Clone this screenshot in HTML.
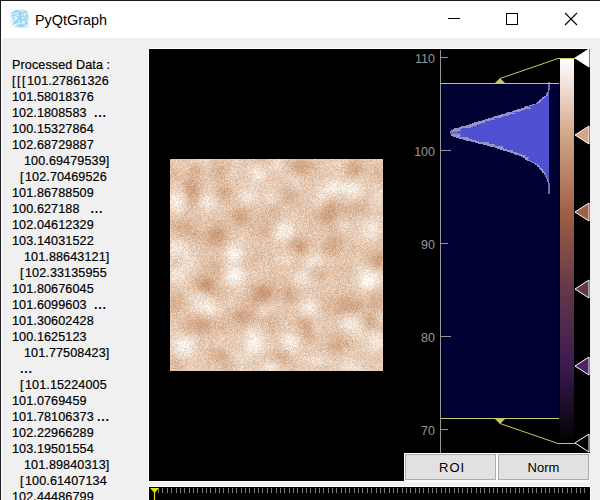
<!DOCTYPE html>
<html><head><meta charset="utf-8">
<style>
html,body{margin:0;padding:0;}
body{width:600px;height:500px;overflow:hidden;position:relative;background:#f0f0f0;font-family:"Liberation Sans",sans-serif;}
.abs{position:absolute;}
.bk{letter-spacing:1.5px;}
.dt{letter-spacing:0.7px;font-weight:bold;-webkit-text-stroke:0;}
.tl{position:absolute;font-size:12.6px;letter-spacing:0.1px;-webkit-text-stroke:0.2px #000;line-height:16px;color:#000;white-space:pre;}
.btn{position:absolute;box-sizing:border-box;border:1px solid #adadad;background:#e1e1e1;font-size:13px;text-align:center;line-height:25px;color:#000;}
.ax{position:absolute;font-size:12.5px;color:#969696;text-align:right;width:30px;line-height:14px;}
</style></head><body>
<div class="abs" style="left:0;top:0;width:600px;height:1px;background:#1c1c1c"></div>
<div class="abs" style="left:0;top:0;width:1px;height:500px;background:#1c1c1c"></div>
<div class="abs" style="left:1px;top:1px;width:599px;height:37px;background:#fff"></div>
<div class="abs" style="left:1px;top:38px;width:1px;height:462px;background:#fff"></div>
<!-- icon -->
<svg class="abs" style="left:9px;top:8px" width="22" height="22" viewBox="0 0 22 22">
 <line x1="1.5" y1="1" x2="1.5" y2="20" stroke="#eeeeee" stroke-width="1"/>
 <path d="M3,3 Q7,0.5 11,2 Q16,0.5 19,3 Q20,8 19.5,12 Q19,16 20,19 Q17,20.5 14,19 Q10,20 6,19 Q3,17 2.5,12 Q2,7 3,3 Z" fill="#cfeaf8"/>
 <g fill="none" stroke="#86cdf0" stroke-width="1.2" stroke-linecap="round" opacity="0.9">
  <path d="M3.5,5 L8,2.5 L11,7 L16,3.5 L18.5,8 L14,11.5 L18,15.5 L12,17.5 L8,13.5 L4,16.5"/>
  <path d="M4,10 L9,8.5 L12.5,12.5 L9,18 L15,19"/>
  <path d="M11,2.5 L11.5,14 M5.5,14 L16,7 M3,8 L7,6.5 M15,13 L19,11"/>
 </g>
 <g fill="#fff" opacity="0.95"><circle cx="7" cy="9.5" r="1.1"/><circle cx="15" cy="14" r="1"/><circle cx="10" cy="15.5" r="0.9"/><circle cx="16" cy="6.5" r="0.9"/><circle cx="6" cy="17" r="0.8"/><circle cx="13.5" cy="9.5" r="0.7"/></g>
</svg>
<div class="abs" style="left:35px;top:10px;font-size:14.4px;line-height:20px;color:#000">PyQtGraph</div>
<!-- window controls -->
<div class="abs" style="left:448px;top:18px;width:12px;height:1px;background:#000"></div>
<div class="abs" style="left:506px;top:13px;width:10px;height:10px;border:1px solid #000"></div>
<svg class="abs" style="left:564px;top:12px" width="14" height="14" viewBox="0 0 14 14"><path d="M1,1 L13,13 M13,1 L1,13" stroke="#000" stroke-width="1.1"/></svg>

<!-- left text -->
<div class="tl" style="top:57px;left:12px">Processed Data :</div>
<div class="tl" style="top:73px;left:12px"><span class="bk">[</span><span class="bk">[</span><span class="bk">[</span>101.27861326</div>
<div class="tl" style="top:89px;left:12px">101.58018376</div>
<div class="tl" style="top:105px;left:12px">102.1808583</div>
<div class="tl" style="top:105px;left:94px"><span class="dt">...</span></div>
<div class="tl" style="top:121px;left:12px">100.15327864</div>
<div class="tl" style="top:137px;left:12px">102.68729887</div>
<div class="tl" style="top:153px;left:24px">100.69479539]</div>
<div class="tl" style="top:169px;left:20px"><span class="bk">[</span>102.70469526</div>
<div class="tl" style="top:185px;left:12px">101.86788509</div>
<div class="tl" style="top:201px;left:12px">100.627188</div>
<div class="tl" style="top:201px;left:90.5px"><span class="dt">...</span></div>
<div class="tl" style="top:217px;left:12px">102.04612329</div>
<div class="tl" style="top:233px;left:12px">103.14031522</div>
<div class="tl" style="top:249px;left:24px">101.88643121]</div>
<div class="tl" style="top:265px;left:20px"><span class="bk">[</span>102.33135955</div>
<div class="tl" style="top:281px;left:12px">101.80676045</div>
<div class="tl" style="top:297px;left:12px">101.6099603</div>
<div class="tl" style="top:297px;left:94px"><span class="dt">...</span></div>
<div class="tl" style="top:313px;left:12px">101.30602428</div>
<div class="tl" style="top:329px;left:12px">100.1625123</div>
<div class="tl" style="top:345px;left:24px">101.77508423]</div>
<div class="tl" style="top:361px;left:20px"><span class="dt">...</span></div>
<div class="tl" style="top:377px;left:20px"><span class="bk">[</span>101.15224005</div>
<div class="tl" style="top:393px;left:12px">101.0769459</div>
<div class="tl" style="top:409px;left:12px">101.78106373</div>
<div class="tl" style="top:409px;left:97px"><span class="dt">...</span></div>
<div class="tl" style="top:425px;left:12px">102.22966289</div>
<div class="tl" style="top:441px;left:12px">103.19501554</div>
<div class="tl" style="top:457px;left:24px">101.89840313]</div>
<div class="tl" style="top:473px;left:20px"><span class="bk">[</span>100.61407134</div>
<div class="tl" style="top:489px;left:12px">102.44486799</div>

<!-- graphics view -->
<div class="abs" style="left:148px;top:48px;width:442px;height:434px;background:#fff"></div>
<div class="abs" style="left:149px;top:49px;width:441px;height:432px;background:#000"></div>
<!-- image -->
<svg class="abs" style="left:170px;top:159px" width="213" height="212" viewBox="170 159 213 212">
 <defs>
  <filter id="bl" x="-20%" y="-20%" width="140%" height="140%"><feGaussianBlur stdDeviation="5.5"/></filter>
  <filter id="nz" x="0" y="0" width="100%" height="100%">
   <feTurbulence type="fractalNoise" baseFrequency="2.2" numOctaves="1" seed="5" result="t"/>
   <feColorMatrix type="matrix" in="t" values="0 0 0 0 1  0 0 0 0 1  0 0 0 0 1  2.4 0 0 0 -0.9"/>
  </filter>
  <filter id="nz2" x="0" y="0" width="100%" height="100%">
   <feTurbulence type="fractalNoise" baseFrequency="2.0" numOctaves="1" seed="11" result="t"/>
   <feColorMatrix type="matrix" in="t" values="0 0 0 0 0.62  0 0 0 0 0.38  0 0 0 0 0.25  2.2 0 0 0 -0.9"/>
  </filter>
  <clipPath id="cp"><rect x="170" y="159" width="213" height="212"/></clipPath>
 </defs>
 <g clip-path="url(#cp)">
 <rect x="170" y="159" width="213" height="212" fill="#dcbc9f"/>
 <g filter="url(#bl)" fill="#b57b55"><ellipse cx="223" cy="172" rx="8.1" ry="7.2" opacity="0.8"/><ellipse cx="191" cy="190" rx="7.2" ry="11.7" opacity="0.9"/><ellipse cx="223" cy="193" rx="6.3" ry="6.3" opacity="0.6"/><ellipse cx="240" cy="216" rx="8.1" ry="7.2" opacity="0.9"/><ellipse cx="217" cy="233" rx="8.1" ry="7.2" opacity="0.9"/><ellipse cx="183" cy="227" rx="7.2" ry="7.2" opacity="0.6"/><ellipse cx="265" cy="229" rx="7.2" ry="7.2" opacity="0.5"/><ellipse cx="301" cy="167" rx="8.1" ry="7.2" opacity="0.9"/><ellipse cx="356" cy="165" rx="7.2" ry="6.3" opacity="0.5"/><ellipse cx="289" cy="197" rx="7.2" ry="7.2" opacity="0.6"/><ellipse cx="327" cy="216" rx="9.0" ry="8.1" opacity="0.9"/><ellipse cx="361" cy="208" rx="8.1" ry="7.2" opacity="0.6"/><ellipse cx="297" cy="244" rx="8.1" ry="7.2" opacity="0.7"/><ellipse cx="329" cy="248" rx="7.2" ry="6.3" opacity="0.5"/><ellipse cx="375" cy="259" rx="7.2" ry="7.2" opacity="0.6"/><ellipse cx="204" cy="284" rx="9.0" ry="7.2" opacity="0.9"/><ellipse cx="261" cy="293" rx="8.1" ry="7.2" opacity="0.9"/><ellipse cx="176" cy="303" rx="7.2" ry="7.2" opacity="0.6"/><ellipse cx="242" cy="316" rx="9.0" ry="7.2" opacity="0.9"/><ellipse cx="202" cy="324" rx="9.0" ry="7.2" opacity="0.9"/><ellipse cx="219" cy="354" rx="8.1" ry="7.2" opacity="0.7"/><ellipse cx="174" cy="365" rx="7.2" ry="7.2" opacity="0.6"/><ellipse cx="289" cy="293" rx="8.1" ry="8.1" opacity="0.7"/><ellipse cx="318" cy="271" rx="7.2" ry="6.3" opacity="0.5"/><ellipse cx="346" cy="305" rx="9.0" ry="8.1" opacity="0.9"/><ellipse cx="376" cy="301" rx="7.2" ry="7.2" opacity="0.6"/><ellipse cx="306" cy="326" rx="8.1" ry="7.2" opacity="0.7"/><ellipse cx="335" cy="345" rx="8.1" ry="7.2" opacity="0.6"/><ellipse cx="282" cy="358" rx="7.2" ry="7.2" opacity="0.6"/></g>
 <g filter="url(#bl)" fill="#fbf6f2"><ellipse cx="176" cy="201" rx="7.2" ry="9.0" opacity="0.9"/><ellipse cx="208" cy="201" rx="7.2" ry="7.2" opacity="0.7"/><ellipse cx="248" cy="195" rx="7.2" ry="7.2" opacity="0.6"/><ellipse cx="176" cy="250" rx="8.1" ry="8.1" opacity="0.8"/><ellipse cx="233" cy="254" rx="8.1" ry="7.2" opacity="0.8"/><ellipse cx="255" cy="172" rx="8.1" ry="7.2" opacity="0.6"/><ellipse cx="293" cy="180" rx="7.2" ry="7.2" opacity="0.6"/><ellipse cx="346" cy="189" rx="12.6" ry="7.2" opacity="1.0"/><ellipse cx="284" cy="231" rx="8.1" ry="8.1" opacity="0.9"/><ellipse cx="371" cy="229" rx="8.1" ry="8.1" opacity="0.7"/><ellipse cx="314" cy="261" rx="8.1" ry="6.3" opacity="0.7"/><ellipse cx="178" cy="273" rx="7.2" ry="7.2" opacity="0.7"/><ellipse cx="234" cy="278" rx="8.1" ry="7.2" opacity="0.7"/><ellipse cx="208" cy="307" rx="8.1" ry="8.1" opacity="0.8"/><ellipse cx="183" cy="345" rx="8.1" ry="9.0" opacity="0.9"/><ellipse cx="255" cy="343" rx="8.1" ry="8.1" opacity="0.8"/><ellipse cx="272" cy="367" rx="7.2" ry="5.4" opacity="0.7"/><ellipse cx="301" cy="278" rx="7.2" ry="7.2" opacity="0.7"/><ellipse cx="369" cy="278" rx="8.1" ry="7.2" opacity="0.8"/><ellipse cx="310" cy="307" rx="8.1" ry="7.2" opacity="0.8"/><ellipse cx="350" cy="324" rx="8.1" ry="7.2" opacity="0.8"/><ellipse cx="289" cy="341" rx="8.1" ry="7.2" opacity="0.8"/><ellipse cx="376" cy="341" rx="7.2" ry="7.2" opacity="0.7"/><ellipse cx="318" cy="362" rx="8.1" ry="6.3" opacity="0.7"/></g>
 <rect x="170" y="159" width="213" height="212" filter="url(#nz)"/>
 <rect x="170" y="159" width="213" height="212" filter="url(#nz2)"/>
 </g>
</svg>

<canvas id="cv" class="abs" style="left:170px;top:159px" width="213" height="212"></canvas>
<script>
(function(){
 var c=document.getElementById('cv'); if(!c||!c.getContext) return; var ctx=c.getContext('2d');
 var W=213,H=212,X0=170,Y0=159; var im=ctx.createImageData(W,H); var d=im.data;
 var B=[[223,172,7.6,6.8,-0.8],[191,190,6.8,11.0,-0.9],[223,193,6.0,6.0,-0.6],[240,216,7.6,6.8,-0.9],[217,233,7.6,6.8,-0.9],[183,227,6.8,6.8,-0.6],[265,229,6.8,6.8,-0.5],[301,167,7.6,6.8,-0.9],[356,165,6.8,6.0,-0.5],[289,197,6.8,6.8,-0.6],[327,216,8.5,7.6,-0.9],[361,208,7.6,6.8,-0.6],[297,244,7.6,6.8,-0.7],[329,248,6.8,6.0,-0.5],[375,259,6.8,6.8,-0.6],[204,284,8.5,6.8,-0.9],[261,293,7.6,6.8,-0.9],[176,303,6.8,6.8,-0.6],[242,316,8.5,6.8,-0.9],[202,324,8.5,6.8,-0.9],[219,354,7.6,6.8,-0.7],[174,365,6.8,6.8,-0.6],[289,293,7.6,7.6,-0.7],[318,271,6.8,6.0,-0.5],[346,305,8.5,7.6,-0.9],[376,301,6.8,6.8,-0.6],[306,326,7.6,6.8,-0.7],[335,345,7.6,6.8,-0.6],[282,358,6.8,6.8,-0.6],[176,201,6.8,8.5,0.9],[208,201,6.8,6.8,0.7],[248,195,6.8,6.8,0.6],[176,250,7.6,7.6,0.8],[233,254,7.6,6.8,0.8],[255,172,7.6,6.8,0.6],[293,180,6.8,6.8,0.6],[346,189,11.9,6.8,1.0],[284,231,7.6,7.6,0.9],[371,229,7.6,7.6,0.7],[314,261,7.6,6.0,0.7],[178,273,6.8,6.8,0.7],[234,278,7.6,6.8,0.7],[208,307,7.6,7.6,0.8],[183,345,7.6,8.5,0.9],[255,343,7.6,7.6,0.8],[272,367,6.8,5.1,0.7],[301,278,6.8,6.8,0.7],[369,278,7.6,6.8,0.8],[310,307,7.6,6.8,0.8],[350,324,7.6,6.8,0.8],[289,341,7.6,6.8,0.8],[376,341,6.8,6.8,0.7],[318,362,7.6,6.0,0.7],[343,226,4.7,4.7,0.29],[191,260,5.7,5.7,0.10],[197,294,5.5,5.5,0.32],[171,366,4.5,4.5,0.28],[278,340,4.5,4.5,-0.16],[184,327,5.6,5.6,-0.27],[208,172,4.6,4.6,0.05],[263,310,4.2,4.2,0.31],[384,318,6.2,6.2,0.31],[186,256,4.2,4.2,0.25],[285,178,5.3,5.3,0.25],[288,181,6.8,6.8,-0.40],[353,370,6.3,6.3,0.40],[283,203,5.4,5.4,0.21],[336,239,6.8,6.8,-0.42],[276,163,5.1,5.1,0.44],[191,373,6.7,6.7,0.17],[177,259,6.1,6.1,-0.36],[232,174,6.5,6.5,0.37],[371,321,5.7,5.7,-0.39],[272,323,6.3,6.3,-0.43],[167,174,6.8,6.8,-0.35],[252,260,6.7,6.7,-0.33],[223,325,4.3,4.3,-0.30],[171,367,4.7,4.7,0.00],[250,372,6.1,6.1,0.09],[274,213,6.5,6.5,-0.36],[304,219,4.8,4.8,-0.04],[207,285,4.2,4.2,-0.43],[197,174,6.6,6.6,0.01],[316,327,4.5,4.5,0.41],[251,256,5.5,5.5,0.18],[336,197,6.5,6.5,-0.06],[221,346,6.6,6.6,0.32],[237,357,6.3,6.3,0.42],[333,376,5.4,5.4,0.22],[339,270,5.5,5.5,-0.09],[359,238,6.2,6.2,0.06],[323,223,4.2,4.2,0.16],[197,234,6.3,6.3,-0.41],[368,285,5.7,5.7,0.16],[178,159,6.2,6.2,0.08],[308,337,4.8,4.8,-0.31],[381,167,5.5,5.5,0.11],[378,173,6.1,6.1,-0.38],[266,292,6.5,6.5,-0.41],[332,187,5.2,5.2,0.43],[355,171,4.0,4.0,-0.42],[339,163,6.4,6.4,0.28],[347,362,5.9,5.9,0.29],[286,302,4.2,4.2,0.05],[386,240,6.1,6.1,-0.29],[272,274,6.3,6.3,-0.16],[270,196,5.7,5.7,0.40],[251,300,5.7,5.7,-0.27],[320,201,5.8,5.8,0.44],[233,302,5.0,5.0,0.13],[208,265,6.4,6.4,-0.26],[244,204,4.5,4.5,0.15],[350,271,5.3,5.3,-0.18],[218,363,5.4,5.4,0.16],[227,192,4.0,4.0,-0.18],[258,270,5.9,5.9,0.17],[360,332,6.1,6.1,0.27],[286,259,6.7,6.7,0.35],[251,347,5.3,5.3,0.23],[170,286,6.8,6.8,-0.06],[359,305,4.1,4.1,-0.38],[239,370,6.0,6.0,0.09],[357,232,4.4,4.4,-0.05],[367,191,5.5,5.5,-0.19],[245,175,6.7,6.7,-0.22],[341,192,5.3,5.3,-0.43],[296,267,5.3,5.3,-0.27],[307,162,6.8,6.8,-0.02],[301,248,4.1,4.1,-0.42],[327,262,4.8,4.8,0.03],[359,267,5.6,5.6,0.08],[360,161,6.0,6.0,0.07],[325,191,6.5,6.5,0.26],[227,364,4.2,4.2,0.04],[184,196,5.9,5.9,0.18],[272,208,5.6,5.6,-0.05],[251,245,5.4,5.4,-0.12],[192,264,4.9,4.9,0.26],[378,319,5.0,5.0,-0.02],[330,205,6.4,6.4,-0.41],[381,278,6.3,6.3,0.09],[354,248,4.3,4.3,-0.26],[331,372,4.7,4.7,-0.01],[339,222,4.7,4.7,0.24],[191,228,5.8,5.8,-0.00],[377,261,5.2,5.2,-0.28],[347,165,4.0,4.0,-0.12],[344,211,5.4,5.4,-0.37],[227,363,6.6,6.6,-0.36],[378,258,4.4,4.4,-0.12],[379,195,6.3,6.3,0.39],[369,322,6.8,6.8,-0.35],[320,368,5.6,5.6,-0.44],[230,252,5.2,5.2,0.20],[204,155,6.0,6.0,0.44],[273,305,6.1,6.1,0.15],[342,161,6.1,6.1,-0.06],[251,332,4.4,4.4,0.38],[346,339,6.8,6.8,-0.25],[297,355,5.6,5.6,0.16],[188,302,4.1,4.1,0.01],[171,222,4.3,4.3,-0.20],[194,305,5.6,5.6,0.25],[346,312,5.8,5.8,0.02],[337,250,5.1,5.1,-0.09],[171,200,5.9,5.9,-0.10],[260,175,4.5,4.5,0.34],[343,233,6.7,6.7,0.06],[332,188,6.9,6.9,-0.04],[196,169,4.2,4.2,-0.45],[338,330,4.8,4.8,-0.18],[368,206,6.7,6.7,0.29],[256,255,5.2,5.2,-0.13],[322,305,7.0,7.0,-0.34],[234,271,6.4,6.4,0.44],[348,175,6.3,6.3,-0.25],[261,171,4.1,4.1,-0.06],[361,218,4.1,4.1,0.17],[227,173,4.6,4.6,0.34],[366,264,5.4,5.4,0.17],[242,240,6.3,6.3,0.15],[363,281,6.5,6.5,0.30],[218,296,5.7,5.7,-0.31],[214,241,6.8,6.8,-0.42],[380,365,5.2,5.2,0.11],[233,163,4.1,4.1,0.21],[216,267,4.9,4.9,-0.44],[252,256,6.9,6.9,0.01],[382,243,6.5,6.5,0.02],[170,358,6.1,6.1,0.07],[262,156,6.6,6.6,-0.40],[189,326,4.9,4.9,-0.15],[226,258,6.4,6.4,-0.15]];
 var s=987654321; function r(){s^=s<<13;s^=s>>>17;s^=s<<5;return (s>>>0)/4294967296;}
 function gn(){var u=r()||1e-9,v=r();return Math.sqrt(-2*Math.log(u))*Math.cos(6.283185*v);}
 var st=[[0,0,0,0],[0.2,60,26,80],[0.4,100,56,74],[0.6,166,106,74],[0.8,213,172,140],[1,255,252,248]];
 function cm(t){ if(t<=0) return st[0].slice(1); if(t>=1) return [255,255,255];
  for(var i=1;i<st.length;i++){ if(t<=st[i][0]){ var a=st[i-1],b=st[i],f=(t-a[0])/(b[0]-a[0]);
   return [a[1]+(b[1]-a[1])*f,a[2]+(b[2]-a[2])*f,a[3]+(b[3]-a[3])*f]; } } return [255,255,255]; }
 for(var y=0;y<H;y++) for(var x=0;x<W;x++){
  var px=X0+x, py=Y0+y, f=0;
  for(var k=0;k<B.length;k++){ var b=B[k]; var dx=(px-b[0])/b[2], dy=(py-b[1])/b[3]; var e=dx*dx+dy*dy; if(e<9) f+=b[4]*Math.exp(-0.5*e); }
  var t=0.872+0.11*f+0.03*gn();
  var col=cm(t); var i=(y*W+x)*4; d[i]=col[0]; d[i+1]=col[1]; d[i+2]=col[2]; d[i+3]=255;
 }
 ctx.putImageData(im,0,0);
})();
</script>

<!-- histogram area -->
<div class="abs" style="left:441px;top:84px;width:118px;height:334px;background:#000032"></div>
<svg class="abs" style="left:404px;top:49px" width="186" height="404" viewBox="0 0 186 404">
 <g shape-rendering="crispEdges"><rect x="144.0" y="33" width="1.6" height="1" fill="#6c6ca4"/><rect x="144.0" y="34" width="1.6" height="1" fill="#6c6ca4"/><rect x="144.0" y="35" width="1.6" height="1" fill="#6c6ca4"/><rect x="144.0" y="36" width="1.6" height="1" fill="#6c6ca4"/><rect x="144.0" y="37" width="1.6" height="1" fill="#6c6ca4"/><rect x="144.0" y="38" width="1.6" height="1" fill="#6c6ca4"/><rect x="144.0" y="39" width="1.6" height="1" fill="#6c6ca4"/><rect x="144.0" y="40" width="1.6" height="1" fill="#8080b8"/><rect x="143.5" y="41" width="1.6" height="1" fill="#8080b8"/><rect x="143.5" y="42" width="1.6" height="1" fill="#8080b8"/><rect x="143.1" y="43" width="1.6" height="1" fill="#8080b8"/><rect x="144.7" y="43" width="0.3" height="1" fill="#5050d2"/><rect x="142.3" y="44" width="1.6" height="1" fill="#8080b8"/><rect x="143.9" y="44" width="1.1" height="1" fill="#5050d2"/><rect x="142.2" y="45" width="1.6" height="1" fill="#8080b8"/><rect x="143.8" y="45" width="1.2" height="1" fill="#5050d2"/><rect x="141.9" y="46" width="2.5" height="1" fill="#9494cc"/><rect x="144.4" y="46" width="0.6" height="1" fill="#5050d2"/><rect x="139.6" y="47" width="2.5" height="1" fill="#9494cc"/><rect x="142.1" y="47" width="2.9" height="1" fill="#5050d2"/><rect x="138.3" y="48" width="2.5" height="1" fill="#9494cc"/><rect x="140.8" y="48" width="4.2" height="1" fill="#5050d2"/><rect x="137.6" y="49" width="2.5" height="1" fill="#9494cc"/><rect x="140.1" y="49" width="4.9" height="1" fill="#5050d2"/><rect x="136.1" y="50" width="2.5" height="1" fill="#9494cc"/><rect x="138.6" y="50" width="6.4" height="1" fill="#5050d2"/><rect x="134.7" y="51" width="2.3" height="1" fill="#9494cc"/><rect x="137.0" y="51" width="8.0" height="1" fill="#5050d2"/><rect x="134.4" y="52" width="2.5" height="1" fill="#9494cc"/><rect x="136.9" y="52" width="8.1" height="1" fill="#5050d2"/><rect x="133.2" y="53" width="2.5" height="1" fill="#9494cc"/><rect x="135.7" y="53" width="9.3" height="1" fill="#5050d2"/><rect x="131.7" y="54" width="2.5" height="1" fill="#9494cc"/><rect x="134.2" y="54" width="10.8" height="1" fill="#5050d2"/><rect x="128.4" y="55" width="2.5" height="1" fill="#9494cc"/><rect x="130.9" y="55" width="14.1" height="1" fill="#5050d2"/><rect x="125.1" y="56" width="2.5" height="1" fill="#9494cc"/><rect x="127.6" y="56" width="17.4" height="1" fill="#5050d2"/><rect x="121.2" y="57" width="2.5" height="1" fill="#9494cc"/><rect x="123.7" y="57" width="21.3" height="1" fill="#5050d2"/><rect x="120.0" y="58" width="6.0" height="1" fill="#9494cc"/><rect x="126.0" y="58" width="19.0" height="1" fill="#5050d2"/><rect x="117.4" y="59" width="9.4" height="1" fill="#9494cc"/><rect x="126.9" y="59" width="18.1" height="1" fill="#5050d2"/><rect x="113.2" y="60" width="7.5" height="1" fill="#9494cc"/><rect x="120.6" y="60" width="24.4" height="1" fill="#5050d2"/><rect x="110.0" y="61" width="7.8" height="1" fill="#9494cc"/><rect x="117.8" y="61" width="27.2" height="1" fill="#5050d2"/><rect x="108.1" y="62" width="7.8" height="1" fill="#9494cc"/><rect x="115.9" y="62" width="29.1" height="1" fill="#5050d2"/><rect x="102.6" y="63" width="6.3" height="1" fill="#9494cc"/><rect x="108.9" y="63" width="36.1" height="1" fill="#5050d2"/><rect x="101.0" y="64" width="10.9" height="1" fill="#9494cc"/><rect x="111.9" y="64" width="33.1" height="1" fill="#5050d2"/><rect x="97.2" y="65" width="8.4" height="1" fill="#9494cc"/><rect x="105.6" y="65" width="39.4" height="1" fill="#5050d2"/><rect x="94.1" y="66" width="9.7" height="1" fill="#9494cc"/><rect x="103.8" y="66" width="41.2" height="1" fill="#5050d2"/><rect x="90.1" y="67" width="9.0" height="1" fill="#9494cc"/><rect x="99.1" y="67" width="45.9" height="1" fill="#5050d2"/><rect x="87.7" y="68" width="9.0" height="1" fill="#9494cc"/><rect x="96.7" y="68" width="48.3" height="1" fill="#5050d2"/><rect x="83.5" y="69" width="6.7" height="1" fill="#9494cc"/><rect x="90.2" y="69" width="54.8" height="1" fill="#5050d2"/><rect x="80.7" y="70" width="10.6" height="1" fill="#9494cc"/><rect x="91.3" y="70" width="53.7" height="1" fill="#5050d2"/><rect x="77.5" y="71" width="8.9" height="1" fill="#9494cc"/><rect x="86.4" y="71" width="58.6" height="1" fill="#5050d2"/><rect x="74.2" y="72" width="6.5" height="1" fill="#9494cc"/><rect x="80.6" y="72" width="64.4" height="1" fill="#5050d2"/><rect x="70.2" y="73" width="10.6" height="1" fill="#9494cc"/><rect x="80.9" y="73" width="64.1" height="1" fill="#5050d2"/><rect x="68.4" y="74" width="8.4" height="1" fill="#9494cc"/><rect x="76.8" y="74" width="68.2" height="1" fill="#5050d2"/><rect x="64.7" y="75" width="10.1" height="1" fill="#9494cc"/><rect x="74.8" y="75" width="70.2" height="1" fill="#5050d2"/><rect x="61.7" y="76" width="11.7" height="1" fill="#9494cc"/><rect x="73.5" y="76" width="71.5" height="1" fill="#5050d2"/><rect x="57.0" y="77" width="12.1" height="1" fill="#9494cc"/><rect x="69.1" y="77" width="75.9" height="1" fill="#5050d2"/><rect x="54.7" y="78" width="12.2" height="1" fill="#9494cc"/><rect x="66.9" y="78" width="78.1" height="1" fill="#5050d2"/><rect x="50.0" y="79" width="7.7" height="1" fill="#9494cc"/><rect x="57.7" y="79" width="87.3" height="1" fill="#5050d2"/><rect x="49.1" y="80" width="6.5" height="1" fill="#9494cc"/><rect x="55.6" y="80" width="89.4" height="1" fill="#5050d2"/><rect x="47.3" y="81" width="9.4" height="1" fill="#9494cc"/><rect x="56.6" y="81" width="88.4" height="1" fill="#5050d2"/><rect x="46.1" y="82" width="7.8" height="1" fill="#8080b8"/><rect x="53.9" y="82" width="91.1" height="1" fill="#5050d2"/><rect x="45.7" y="83" width="7.2" height="1" fill="#6c6ca4"/><rect x="52.9" y="83" width="92.1" height="1" fill="#5050d2"/><rect x="45.5" y="84" width="12.3" height="1" fill="#6c6ca4"/><rect x="57.8" y="84" width="87.2" height="1" fill="#5050d2"/><rect x="46.6" y="85" width="9.4" height="1" fill="#9494cc"/><rect x="55.9" y="85" width="89.1" height="1" fill="#5050d2"/><rect x="46.9" y="86" width="9.7" height="1" fill="#9494cc"/><rect x="56.6" y="86" width="88.4" height="1" fill="#5050d2"/><rect x="48.9" y="87" width="7.5" height="1" fill="#9494cc"/><rect x="56.4" y="87" width="88.6" height="1" fill="#5050d2"/><rect x="51.6" y="88" width="12.2" height="1" fill="#9494cc"/><rect x="63.8" y="88" width="81.2" height="1" fill="#5050d2"/><rect x="54.7" y="89" width="10.1" height="1" fill="#9494cc"/><rect x="64.8" y="89" width="80.2" height="1" fill="#5050d2"/><rect x="59.0" y="90" width="8.8" height="1" fill="#9494cc"/><rect x="67.8" y="90" width="77.2" height="1" fill="#5050d2"/><rect x="62.2" y="91" width="9.3" height="1" fill="#9494cc"/><rect x="71.6" y="91" width="73.4" height="1" fill="#5050d2"/><rect x="67.1" y="92" width="7.9" height="1" fill="#9494cc"/><rect x="75.0" y="92" width="70.0" height="1" fill="#5050d2"/><rect x="71.3" y="93" width="14.0" height="1" fill="#9494cc"/><rect x="85.3" y="93" width="59.7" height="1" fill="#5050d2"/><rect x="73.8" y="94" width="10.9" height="1" fill="#9494cc"/><rect x="84.6" y="94" width="60.4" height="1" fill="#5050d2"/><rect x="79.1" y="95" width="12.1" height="1" fill="#9494cc"/><rect x="91.1" y="95" width="53.9" height="1" fill="#5050d2"/><rect x="82.7" y="96" width="8.4" height="1" fill="#9494cc"/><rect x="91.2" y="96" width="53.8" height="1" fill="#5050d2"/><rect x="86.1" y="97" width="12.7" height="1" fill="#9494cc"/><rect x="98.9" y="97" width="46.1" height="1" fill="#5050d2"/><rect x="91.2" y="98" width="7.7" height="1" fill="#9494cc"/><rect x="98.8" y="98" width="46.2" height="1" fill="#5050d2"/><rect x="93.0" y="99" width="6.6" height="1" fill="#9494cc"/><rect x="99.7" y="99" width="45.3" height="1" fill="#5050d2"/><rect x="95.9" y="100" width="7.5" height="1" fill="#9494cc"/><rect x="103.4" y="100" width="41.6" height="1" fill="#5050d2"/><rect x="99.1" y="101" width="9.6" height="1" fill="#9494cc"/><rect x="108.7" y="101" width="36.3" height="1" fill="#5050d2"/><rect x="103.4" y="102" width="6.0" height="1" fill="#9494cc"/><rect x="109.4" y="102" width="35.6" height="1" fill="#5050d2"/><rect x="106.1" y="103" width="7.0" height="1" fill="#9494cc"/><rect x="113.0" y="103" width="32.0" height="1" fill="#5050d2"/><rect x="109.0" y="104" width="6.5" height="1" fill="#9494cc"/><rect x="115.4" y="104" width="29.6" height="1" fill="#5050d2"/><rect x="111.2" y="105" width="6.3" height="1" fill="#9494cc"/><rect x="117.5" y="105" width="27.5" height="1" fill="#5050d2"/><rect x="114.7" y="106" width="7.2" height="1" fill="#9494cc"/><rect x="121.9" y="106" width="23.1" height="1" fill="#5050d2"/><rect x="117.0" y="107" width="3.5" height="1" fill="#9494cc"/><rect x="120.5" y="107" width="24.5" height="1" fill="#5050d2"/><rect x="119.2" y="108" width="6.0" height="1" fill="#9494cc"/><rect x="125.3" y="108" width="19.7" height="1" fill="#5050d2"/><rect x="121.3" y="109" width="2.5" height="1" fill="#9494cc"/><rect x="123.8" y="109" width="21.2" height="1" fill="#5050d2"/><rect x="121.4" y="110" width="2.5" height="1" fill="#9494cc"/><rect x="123.9" y="110" width="21.1" height="1" fill="#5050d2"/><rect x="123.4" y="111" width="2.5" height="1" fill="#9494cc"/><rect x="125.9" y="111" width="19.1" height="1" fill="#5050d2"/><rect x="125.6" y="112" width="2.5" height="1" fill="#9494cc"/><rect x="128.1" y="112" width="16.9" height="1" fill="#5050d2"/><rect x="127.6" y="113" width="2.5" height="1" fill="#9494cc"/><rect x="130.1" y="113" width="14.9" height="1" fill="#5050d2"/><rect x="129.7" y="114" width="2.5" height="1" fill="#9494cc"/><rect x="132.2" y="114" width="12.8" height="1" fill="#5050d2"/><rect x="131.3" y="115" width="2.5" height="1" fill="#9494cc"/><rect x="133.8" y="115" width="11.2" height="1" fill="#5050d2"/><rect x="132.8" y="116" width="2.0" height="1" fill="#9494cc"/><rect x="134.8" y="116" width="10.2" height="1" fill="#5050d2"/><rect x="133.3" y="117" width="2.4" height="1" fill="#9494cc"/><rect x="135.7" y="117" width="9.3" height="1" fill="#5050d2"/><rect x="134.6" y="118" width="1.8" height="1" fill="#9494cc"/><rect x="136.4" y="118" width="8.6" height="1" fill="#5050d2"/><rect x="135.2" y="119" width="2.4" height="1" fill="#9494cc"/><rect x="137.5" y="119" width="7.5" height="1" fill="#5050d2"/><rect x="136.2" y="120" width="2.5" height="1" fill="#9494cc"/><rect x="138.7" y="120" width="6.3" height="1" fill="#5050d2"/><rect x="136.6" y="121" width="2.5" height="1" fill="#9494cc"/><rect x="139.1" y="121" width="5.9" height="1" fill="#5050d2"/><rect x="137.8" y="122" width="2.4" height="1" fill="#9494cc"/><rect x="140.2" y="122" width="4.8" height="1" fill="#5050d2"/><rect x="138.2" y="123" width="2.5" height="1" fill="#9494cc"/><rect x="140.7" y="123" width="4.3" height="1" fill="#5050d2"/><rect x="140.0" y="124" width="1.9" height="1" fill="#8080b8"/><rect x="141.9" y="124" width="3.1" height="1" fill="#5050d2"/><rect x="140.1" y="125" width="1.9" height="1" fill="#8080b8"/><rect x="142.0" y="125" width="3.0" height="1" fill="#5050d2"/><rect x="140.5" y="126" width="1.6" height="1" fill="#8080b8"/><rect x="142.1" y="126" width="2.9" height="1" fill="#5050d2"/><rect x="140.9" y="127" width="1.6" height="1" fill="#8080b8"/><rect x="142.5" y="127" width="2.5" height="1" fill="#5050d2"/><rect x="141.7" y="128" width="1.6" height="1" fill="#8080b8"/><rect x="143.3" y="128" width="1.7" height="1" fill="#5050d2"/><rect x="142.1" y="129" width="1.6" height="1" fill="#8080b8"/><rect x="143.7" y="129" width="1.3" height="1" fill="#5050d2"/><rect x="142.5" y="130" width="1.6" height="1" fill="#8080b8"/><rect x="144.1" y="130" width="0.9" height="1" fill="#5050d2"/><rect x="142.9" y="131" width="1.6" height="1" fill="#8080b8"/><rect x="144.5" y="131" width="0.5" height="1" fill="#5050d2"/><rect x="143.3" y="132" width="1.6" height="1" fill="#8080b8"/><rect x="144.9" y="132" width="0.1" height="1" fill="#5050d2"/><rect x="143.6" y="133" width="1.6" height="1" fill="#8080b8"/><rect x="144.0" y="134" width="1.6" height="1" fill="#6c6ca4"/><rect x="144.0" y="135" width="1.6" height="1" fill="#6c6ca4"/><rect x="144.0" y="136" width="1.6" height="1" fill="#6c6ca4"/><rect x="144.0" y="137" width="1.6" height="1" fill="#6c6ca4"/><rect x="144.0" y="138" width="1.6" height="1" fill="#6c6ca4"/><rect x="144.0" y="139" width="1.6" height="1" fill="#6c6ca4"/><rect x="144.0" y="140" width="1.6" height="1" fill="#6c6ca4"/><rect x="144.0" y="141" width="1.6" height="1" fill="#6c6ca4"/><rect x="144.0" y="142" width="1.6" height="1" fill="#6c6ca4"/><rect x="144.0" y="143" width="1.6" height="1" fill="#6c6ca4"/><rect x="144.0" y="144" width="1.6" height="1" fill="#6c6ca4"/></g>
 <line x1="36.5" y1="1" x2="36.5" y2="404" stroke="#969696" stroke-width="1"/>
 <g stroke="#969696" stroke-width="1">
  <line x1="37" y1="8.5" x2="44" y2="8.5"/>
  <line x1="37" y1="101.5" x2="47" y2="101.5"/>
  <line x1="37" y1="194.5" x2="44" y2="194.5"/>
  <line x1="37" y1="287.5" x2="47" y2="287.5"/>
  <line x1="37" y1="380.5" x2="44" y2="380.5"/>
 </g>
 <g stroke="#c8c864" stroke-width="1" fill="none">
  <line x1="37" y1="34.5" x2="155" y2="34.5"/>
  <line x1="37" y1="369.5" x2="155" y2="369.5"/>
  <polyline points="96,29.5 154,9.5 171,9.5"/>
  <polyline points="96,374.5 154,394.5 171,394.5"/>
 </g>
 <polygon points="91,34 96,29 101,34" fill="#c8c864"/>
 <polygon points="91,370 96,375 101,370" fill="#c8c864"/>
</svg>
<div class="ax" style="left:405px;top:52px">110</div>
<div class="ax" style="left:405px;top:145px">100</div>
<div class="ax" style="left:405px;top:238px">90</div>
<div class="ax" style="left:405px;top:331px">80</div>
<div class="ax" style="left:405px;top:424px">70</div>
<!-- colorbar -->
<div class="abs" style="left:560px;top:59px;width:14px;height:384px;background:linear-gradient(to bottom,#ffffff 0%,#d2a587 20%,#a05f44 40%,#64384a 60%,#3c1a50 80%,#000000 100%)"></div>
<svg class="abs" style="left:570px;top:45px" width="20" height="410" viewBox="0 0 20 410">
 <g stroke="#fff" stroke-width="1">
  <polygon points="5,13 19,4 19,22" fill="#ffffff"/>
  <polygon points="5,90 19,81 19,99" fill="#d2a587"/>
  <polygon points="5,167 19,158 19,176" fill="#a05f44"/>
  <polygon points="5,244 19,235 19,253" fill="#64384a"/>
  <polygon points="5,321 19,312 19,330" fill="#4a2464"/>
  <polygon points="5,398 19,389 19,407" fill="#000000"/>
 </g>
</svg>
<!-- buttons -->
<div class="abs" style="left:404px;top:453px;width:186px;height:27px;background:#fff"></div><div class="abs" style="left:589px;top:453px;width:1px;height:28px;background:#f0f0f0"></div><div class="abs" style="left:404px;top:480px;width:186px;height:1px;background:#f6f6f6"></div>
<div class="btn" style="left:405px;top:454px;width:91px;height:26px;letter-spacing:0.9px;text-indent:3px">ROI</div>
<div class="btn" style="left:498px;top:454px;width:91px;height:26px">Norm</div>
<div class="abs" style="left:149px;top:481px;width:441px;height:1px;background:#fff"></div>
<div class="abs" style="left:149px;top:482px;width:441px;height:4px;background:#f0f0f0"></div>

<!-- timeline -->
<div class="abs" style="left:148px;top:486px;width:443px;height:14px;background:#fff"></div>
<div class="abs" style="left:149px;top:487px;width:441px;height:13px;background:#000"></div>
<svg class="abs" style="left:149px;top:487px" width="441" height="13">
 <g stroke="#7a7a7a" stroke-width="1"><line x1="9.50" y1="1" x2="9.50" y2="6"/><line x1="13.50" y1="1" x2="13.50" y2="6"/><line x1="18.50" y1="1" x2="18.50" y2="6"/><line x1="22.50" y1="1" x2="22.50" y2="6"/><line x1="27.50" y1="1" x2="27.50" y2="6"/><line x1="31.50" y1="1" x2="31.50" y2="6"/><line x1="35.50" y1="1" x2="35.50" y2="6"/><line x1="40.50" y1="1" x2="40.50" y2="6"/><line x1="44.50" y1="1" x2="44.50" y2="6"/><line x1="48.50" y1="1" x2="48.50" y2="6"/><line x1="53.50" y1="1" x2="53.50" y2="6"/><line x1="57.50" y1="1" x2="57.50" y2="6"/><line x1="61.50" y1="1" x2="61.50" y2="6"/><line x1="66.50" y1="1" x2="66.50" y2="6"/><line x1="70.50" y1="1" x2="70.50" y2="6"/><line x1="74.50" y1="1" x2="74.50" y2="6"/><line x1="79.50" y1="1" x2="79.50" y2="6"/><line x1="83.50" y1="1" x2="83.50" y2="6"/><line x1="87.50" y1="1" x2="87.50" y2="6"/><line x1="92.50" y1="1" x2="92.50" y2="6"/><line x1="96.50" y1="1" x2="96.50" y2="6"/><line x1="100.50" y1="1" x2="100.50" y2="6"/><line x1="105.50" y1="1" x2="105.50" y2="6"/><line x1="109.50" y1="1" x2="109.50" y2="6"/><line x1="113.50" y1="1" x2="113.50" y2="6"/><line x1="118.50" y1="1" x2="118.50" y2="6"/><line x1="122.50" y1="1" x2="122.50" y2="6"/><line x1="127.50" y1="1" x2="127.50" y2="6"/><line x1="131.50" y1="1" x2="131.50" y2="6"/><line x1="135.50" y1="1" x2="135.50" y2="6"/><line x1="140.50" y1="1" x2="140.50" y2="6"/><line x1="144.50" y1="1" x2="144.50" y2="6"/><line x1="148.50" y1="1" x2="148.50" y2="6"/><line x1="153.50" y1="1" x2="153.50" y2="6"/><line x1="157.50" y1="1" x2="157.50" y2="6"/><line x1="161.50" y1="1" x2="161.50" y2="6"/><line x1="166.50" y1="1" x2="166.50" y2="6"/><line x1="170.50" y1="1" x2="170.50" y2="6"/><line x1="174.50" y1="1" x2="174.50" y2="6"/><line x1="179.50" y1="1" x2="179.50" y2="6"/><line x1="183.50" y1="1" x2="183.50" y2="6"/><line x1="187.50" y1="1" x2="187.50" y2="6"/><line x1="192.50" y1="1" x2="192.50" y2="6"/><line x1="196.50" y1="1" x2="196.50" y2="6"/><line x1="200.50" y1="1" x2="200.50" y2="6"/><line x1="205.50" y1="1" x2="205.50" y2="6"/><line x1="209.50" y1="1" x2="209.50" y2="6"/><line x1="213.50" y1="1" x2="213.50" y2="6"/><line x1="218.50" y1="1" x2="218.50" y2="6"/><line x1="222.50" y1="1" x2="222.50" y2="6"/><line x1="227.50" y1="1" x2="227.50" y2="6"/><line x1="231.50" y1="1" x2="231.50" y2="6"/><line x1="235.50" y1="1" x2="235.50" y2="6"/><line x1="240.50" y1="1" x2="240.50" y2="6"/><line x1="244.50" y1="1" x2="244.50" y2="6"/><line x1="248.50" y1="1" x2="248.50" y2="6"/><line x1="253.50" y1="1" x2="253.50" y2="6"/><line x1="257.50" y1="1" x2="257.50" y2="6"/><line x1="261.50" y1="1" x2="261.50" y2="6"/><line x1="266.50" y1="1" x2="266.50" y2="6"/><line x1="270.50" y1="1" x2="270.50" y2="6"/><line x1="274.50" y1="1" x2="274.50" y2="6"/><line x1="279.50" y1="1" x2="279.50" y2="6"/><line x1="283.50" y1="1" x2="283.50" y2="6"/><line x1="287.50" y1="1" x2="287.50" y2="6"/><line x1="292.50" y1="1" x2="292.50" y2="6"/><line x1="296.50" y1="1" x2="296.50" y2="6"/><line x1="300.50" y1="1" x2="300.50" y2="6"/><line x1="305.50" y1="1" x2="305.50" y2="6"/><line x1="309.50" y1="1" x2="309.50" y2="6"/><line x1="313.50" y1="1" x2="313.50" y2="6"/><line x1="318.50" y1="1" x2="318.50" y2="6"/><line x1="322.50" y1="1" x2="322.50" y2="6"/><line x1="327.50" y1="1" x2="327.50" y2="6"/><line x1="331.50" y1="1" x2="331.50" y2="6"/><line x1="335.50" y1="1" x2="335.50" y2="6"/><line x1="340.50" y1="1" x2="340.50" y2="6"/><line x1="344.50" y1="1" x2="344.50" y2="6"/><line x1="348.50" y1="1" x2="348.50" y2="6"/><line x1="353.50" y1="1" x2="353.50" y2="6"/><line x1="357.50" y1="1" x2="357.50" y2="6"/><line x1="361.50" y1="1" x2="361.50" y2="6"/><line x1="366.50" y1="1" x2="366.50" y2="6"/><line x1="370.50" y1="1" x2="370.50" y2="6"/><line x1="374.50" y1="1" x2="374.50" y2="6"/><line x1="379.50" y1="1" x2="379.50" y2="6"/><line x1="383.50" y1="1" x2="383.50" y2="6"/><line x1="387.50" y1="1" x2="387.50" y2="6"/><line x1="392.50" y1="1" x2="392.50" y2="6"/><line x1="396.50" y1="1" x2="396.50" y2="6"/><line x1="400.50" y1="1" x2="400.50" y2="6"/><line x1="405.50" y1="1" x2="405.50" y2="6"/><line x1="409.50" y1="1" x2="409.50" y2="6"/><line x1="413.50" y1="1" x2="413.50" y2="6"/><line x1="418.50" y1="1" x2="418.50" y2="6"/><line x1="422.50" y1="1" x2="422.50" y2="6"/><line x1="427.50" y1="1" x2="427.50" y2="6"/><line x1="431.50" y1="1" x2="431.50" y2="6"/><line x1="435.50" y1="1" x2="435.50" y2="6"/></g>
 <polygon points="1,1 10,1 5.5,6" fill="#e6e600"/>
 <line x1="5.5" y1="1" x2="5.5" y2="13" stroke="#e6e600" stroke-width="1.2"/>
</svg>
</body></html>
